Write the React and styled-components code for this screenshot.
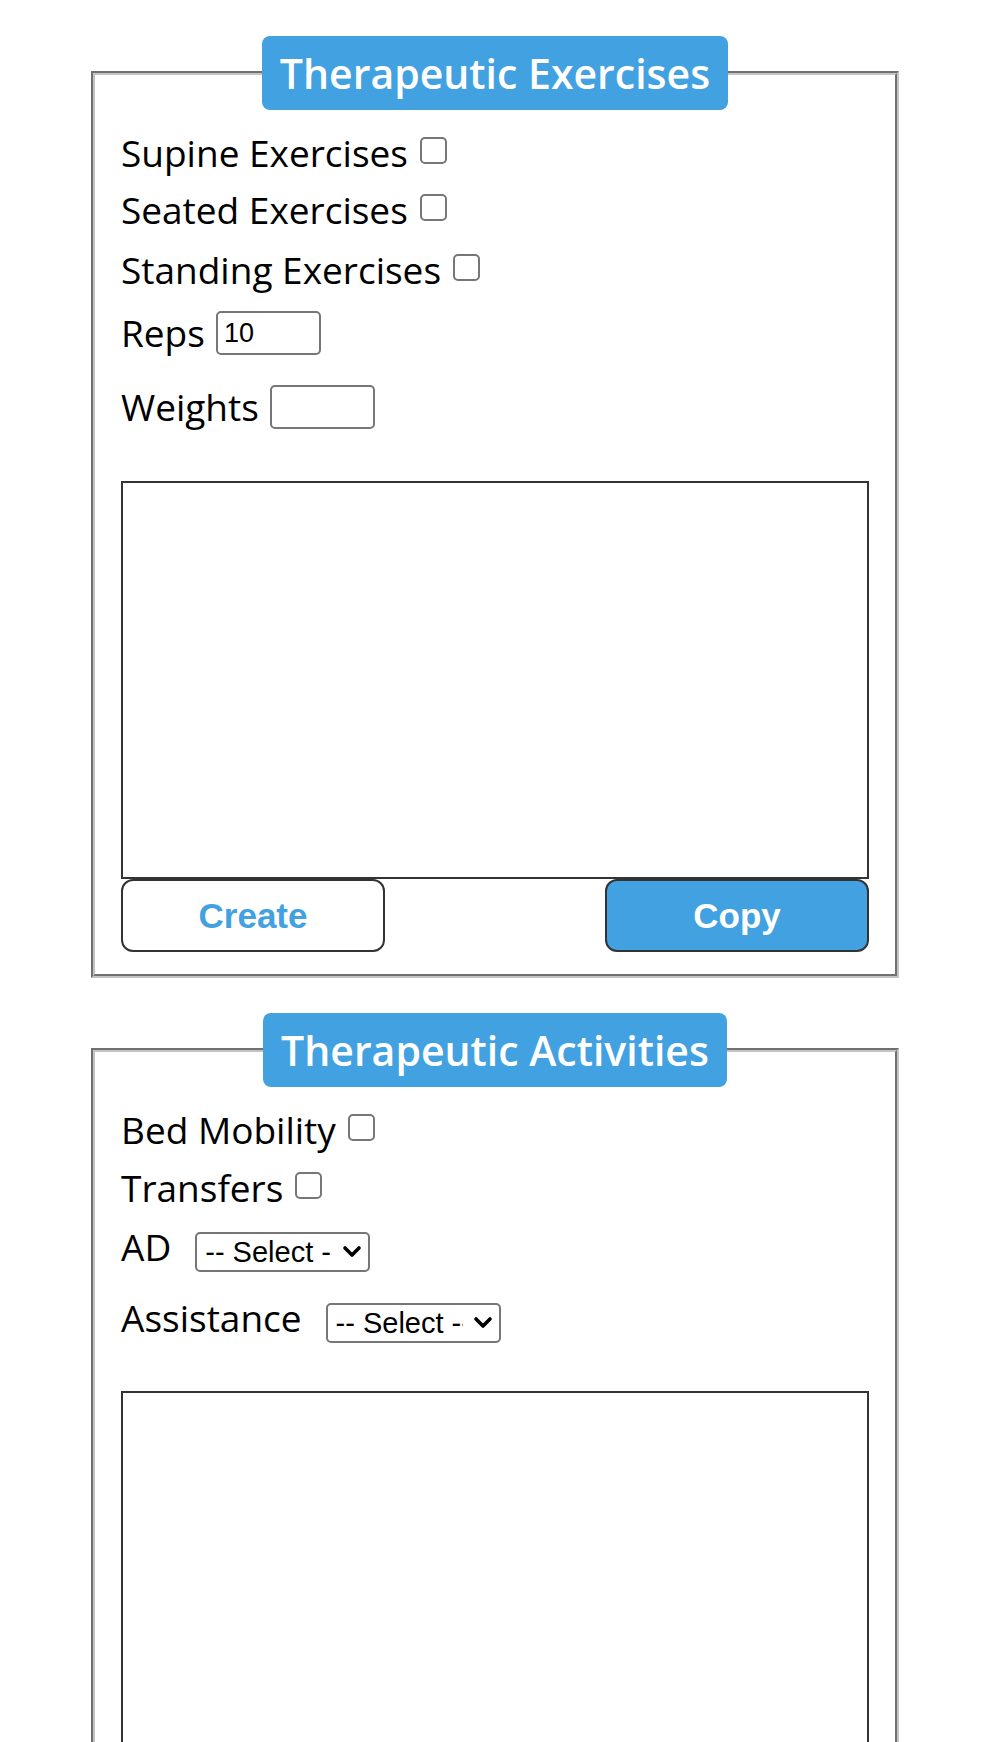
import styled, { createGlobalStyle } from 'styled-components';

const GlobalStyle = createGlobalStyle`
  body {
    margin: 0;
    background: #ffffff;
    font-family: "Open Sans", "Noto Sans", sans-serif;
  }
`;

const BLUE = '#42a1e0';

function Dropdown() {
  return (
    <SelectWrap>
      <Select defaultValue="">
        <option value="">-- Select --</option>
        <option>Walker</option>
        <option>Cane</option>
        <option>Independent</option>
      </Select>
      <Chevron viewBox="0 0 20 14" aria-hidden="true">
        <polyline points="3,3 10,10 17,3" />
      </Chevron>
    </SelectWrap>
  );
}

export default function App() {
  return (
    <Page>
      <GlobalStyle />
      <Fieldset>
        <Legend>Therapeutic Exercises</Legend>
        <Row $top={19}>
          <Label>Supine Exercises</Label>
          <Check type="checkbox" />
        </Row>
        <Row $top={9}>
          <Label>Seated Exercises</Label>
          <Check type="checkbox" />
        </Row>
        <Row $top={12}>
          <Label>Standing Exercises</Label>
          <Check type="checkbox" />
        </Row>
        <Row $top={15}>
          <Label>Reps</Label>
          <NumberInput type="text" defaultValue="10" />
        </Row>
        <Row $top={26}>
          <Label>Weights</Label>
          <NumberInput type="text" />
        </Row>
        <Notes $top={50} />
        <Actions>
          <ActionButton>Create</ActionButton>
          <ActionButton $primary>Copy</ActionButton>
        </Actions>
      </Fieldset>

      <Fieldset>
        <Legend>Therapeutic Activities</Legend>
        <Row $top={19}>
          <Label>Bed Mobility</Label>
          <Check type="checkbox" />
        </Row>
        <Row $top={10}>
          <Label>Transfers</Label>
          <Check type="checkbox" />
        </Row>
        <Row $top={11}>
          <Label $wide>AD</Label>
          <Dropdown />
        </Row>
        <Row $top={23}>
          <Label $wide>Assistance</Label>
          <Dropdown />
        </Row>
        <Notes $top={49} />
        <Actions>
          <ActionButton>Create</ActionButton>
          <ActionButton $primary>Copy</ActionButton>
        </Actions>
      </Fieldset>
    </Page>
  );
}

const Page = styled.div`
  padding: 36px 0 40px;
`;

const Fieldset = styled.fieldset`
  width: 808px;
  box-sizing: border-box;
  margin: 0 auto 35px;
  padding: 0 26px 22px;
  border: 4px groove #c4c4c4;
  min-inline-size: 0;
`;

const Legend = styled.legend`
  margin: 0 auto;
  padding: 0 18px;
  height: 74px;
  box-sizing: border-box;
  line-height: 74px;
  background: ${BLUE};
  color: #ffffff;
  border-radius: 8px;
  font-size: 41px;
  font-weight: 600;
`;

const Row = styled.div`
  display: flex;
  align-items: center;
  height: 48px;
  margin-top: ${(p) => p.$top}px;
`;

const Label = styled.span`
  font-size: 37px;
  line-height: 48px;
  color: #000000;
  margin-right: ${(p) => (p.$wide ? 24 : 11)}px;
`;

const Check = styled.input`
  appearance: none;
  width: 27px;
  height: 27px;
  margin: -6px 0 0 1px;
  border: 2px solid #767676;
  border-radius: 5px;
  background: #ffffff;
  box-sizing: border-box;
`;

const NumberInput = styled.input`
  width: 105px;
  height: 44px;
  box-sizing: border-box;
  margin: 0;
  padding: 0 6px;
  border: 2px solid #767676;
  border-radius: 5px;
  font-family: "Liberation Sans", Arial, sans-serif;
  font-size: 27px;
  color: #000000;
  background: #ffffff;
  outline: none;
`;

const SelectWrap = styled.span`
  position: relative;
  display: inline-flex;
  margin-top: 10px;
`;

const Select = styled.select`
  appearance: none;
  width: 175px;
  height: 40px;
  box-sizing: border-box;
  margin: 0;
  padding: 0 36px 0 8px;
  border: 2px solid #767676;
  border-radius: 5px;
  font-family: "Liberation Sans", Arial, sans-serif;
  font-size: 29px;
  color: #000000;
  background: #ffffff;
`;

const Chevron = styled.svg`
  position: absolute;
  right: 8px;
  top: 50%;
  width: 20px;
  height: 14px;
  transform: translateY(-50%);
  pointer-events: none;
  fill: none;
  stroke: #000000;
  stroke-width: 3.6;
  stroke-linecap: round;
  stroke-linejoin: round;
`;

const Notes = styled.textarea`
  display: block;
  width: 100%;
  height: 398px;
  box-sizing: border-box;
  margin: ${(p) => p.$top}px 0 0;
  border: 2px solid #333333;
  resize: none;
  font-family: "Liberation Sans", Arial, sans-serif;
  font-size: 26px;
  outline: none;
`;

const Actions = styled.div`
  display: flex;
  justify-content: space-between;
`;

const ActionButton = styled.button`
  width: 264px;
  height: 73px;
  border: 2px solid #333333;
  border-radius: 12px;
  background: ${(p) => (p.$primary ? BLUE : '#ffffff')};
  color: ${(p) => (p.$primary ? '#ffffff' : BLUE)};
  font-family: "Liberation Sans", Arial, sans-serif;
  font-size: 35px;
  font-weight: 700;
  cursor: pointer;
`;
